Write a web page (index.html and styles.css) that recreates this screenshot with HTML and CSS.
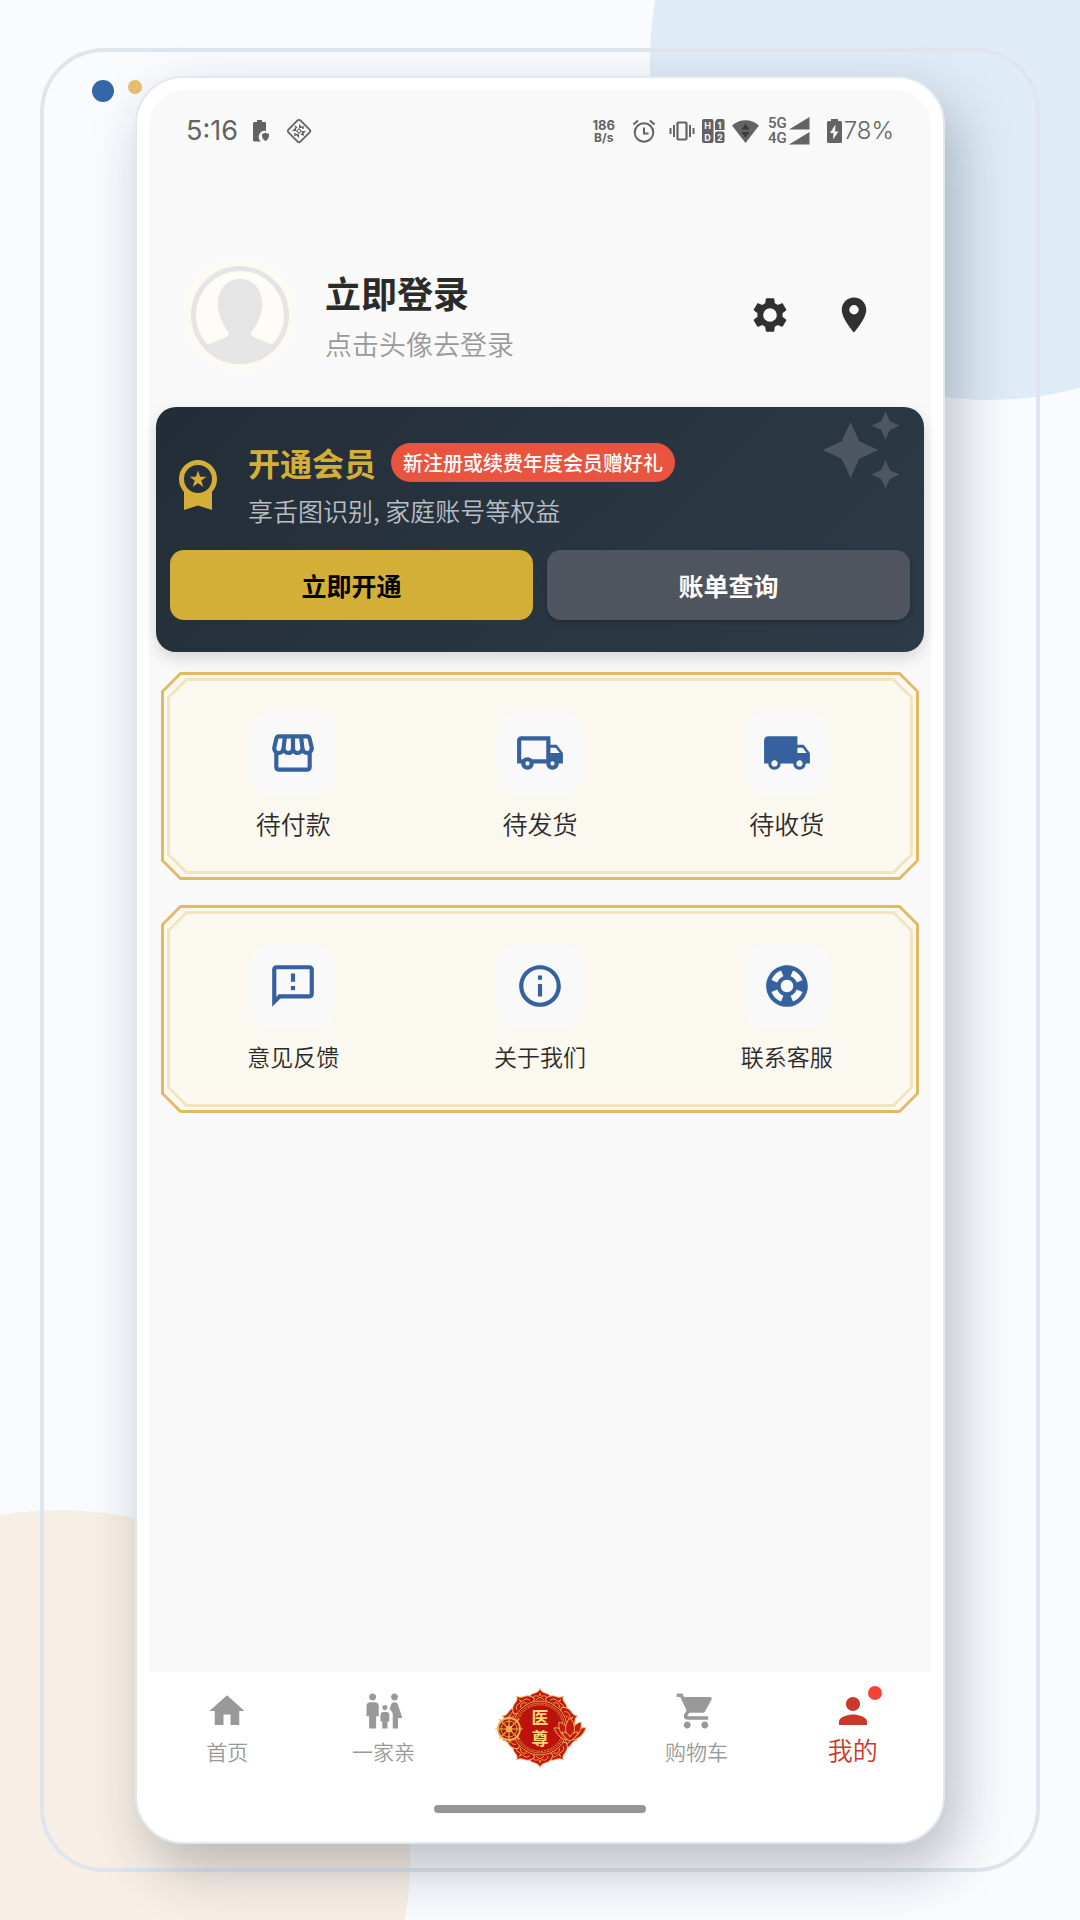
FILE: index.html
```html
<!DOCTYPE html>
<html lang="zh-CN">
<head>
<meta charset="utf-8">
<meta name="viewport" content="width=device-width, initial-scale=1">
<title>我的</title>
<link rel="stylesheet" href="styles.css">
</head>
<body>
<div class="page">
	<div class="circle circle-blue"></div>
	<div class="circle circle-sand"></div>
	<div class="outline"></div>
	<div class="dots"><i class="dot dot-blue"></i><i class="dot dot-gold"></i></div>

	<div class="phone">
		<div class="screen">
			<div class="status">
				<span class="time">5:16</span>
				<svg class="st-clip" width="17" height="22" viewBox="0 0 17 22"><path d="M4 0h5v2h3a1 1 0 0 1 1 1v8a6 6 0 0 0-5 10.500H1.500A1.500 1.500 0 0 1 0 20V3.500A1.500 1.500 0 0 1 1.500 2H4z"/><path d="M12.500 12.500c1 .9 2.200 1.200 3.500 1.300.2 3.400-.6 5.600-3.500 7.200-2.900-1.600-3.700-3.800-3.500-7.200 1.300-.1 2.500-.4 3.500-1.300z"/></svg>
				<svg class="st-diamond" width="26" height="26" viewBox="0 0 26 26"><rect x="4.500" y="4.500" width="17" height="17" rx="2" transform="rotate(45 13 13)" fill="none" stroke="#636363" stroke-width="1.800"/><path d="M13 6l4 4h-4zM20 13l-4 4v-4zM13 20l-4-4h4zM6 13l4-4v4zM13 10l3 3-3 3-3-3z"/><path d="M9 8l2 2M17 8v3M18 17l-3-1M9 18v-3" stroke="#636363" stroke-width="1.500"/><circle cx="13" cy="13" r="1.200" fill="#f9f9f9"/></svg>
				<span class="grow"></span>
				<span class="speed"><b>186</b><b class="unit">B/s</b></span>
				<svg class="st-alarm" width="24" height="24" viewBox="0 0 24 24"><g fill="none" stroke="#636363" stroke-width="2"><circle cx="12" cy="13.500" r="9.300"/><path d="M12 8.500v6h4.500M1.500 5.500L6 1.500M18 1.500l4.500 4"/></g></svg>
				<svg class="st-vibrate" width="26" height="22" viewBox="0 0 26 22"><rect x="8.500" y="2.500" width="9" height="17" rx="1" fill="none" stroke="#636363" stroke-width="2.200"/><path d="M5 5v12M1.500 8v6M21 5v12M24.500 8v6" stroke="#636363" stroke-width="2"/></svg>
				<svg class="st-hd" width="23" height="26" viewBox="0 0 23 26"><rect x="0" y="1" width="11.500" height="24" rx="2"/><path d="M15 1h5.500a2 2 0 0 1 2 2v9H13V4z"/><rect x="13" y="13.500" width="9.500" height="11.500" rx="2"/><g class="st-tiny"><text x="2.300" y="10.500">H</text><text x="15.500" y="10.500">1</text><text x="2.300" y="22.500">D</text><text x="15" y="22.500">2</text></g></svg>
				<svg class="st-wifi" width="27" height="23" viewBox="0 0 27 23"><path d="M0 5.500C8-1.500 19-1.500 27 5.500L13.500 23z"/><path d="M13.500 4l4 5.500h-8zM9.500 12h8l-4 5.500z" fill="#3a3a3a"/></svg>
				<span class="net"><b>5G</b><b>4G</b></span>
				<svg class="st-signal" width="21" height="28" viewBox="0 0 21 28"><path d="M20.500 0v12.500H0zM20.500 15v12.500H0z"/></svg>
				<svg class="st-battery" width="15" height="24" viewBox="0 0 15 24"><path d="M4 0h7v2h2.500A1.500 1.500 0 0 1 15 3.500v19a1.500 1.500 0 0 1-1.500 1.500h-12A1.500 1.500 0 0 1 0 22.500v-19A1.500 1.500 0 0 1 1.500 2H4z"/><path d="M8.500 5.500L3 14h3.500L6 20.500l5.500-8H8z" fill="#f9f9f9"/></svg>
				<span class="percent">78%</span>
			</div>

			<header class="profile">
				<button class="avatar" aria-label="头像">
					<svg viewBox="0 0 98 98"><defs><clipPath id="face"><circle cx="49" cy="49" r="46"/></clipPath></defs><circle cx="49" cy="49" r="46.500" fill="#fefcf6" stroke="#e5e5e6" stroke-width="5"/><path clip-path="url(#face)" fill="#e5e5e6" d="M49 13c13 0 22 10 22 25 0 11-4 19-9 26-3 4-2 6 3 8l22 9v20H11V81l22-9c5-2 6-4 3-8-5-7-9-15-9-26 0-15 9-25 22-25z"/></svg>
				</button>
				<div class="who">
					<h1>立即登录</h1>
					<p>点击头像去登录</p>
				</div>
				<button class="icon-btn" aria-label="设置">
					<svg viewBox="0 0 24 24"><path d="M19.140 12.940c.04-.3.06-.61.06-.94 0-.32-.02-.64-.07-.94l2.030-1.580c.18-.14.23-.41.12-.61l-1.920-3.320c-.12-.22-.37-.29-.59-.22l-2.390.96c-.5-.38-1.030-.7-1.620-.94l-.36-2.540c-.04-.24-.24-.41-.48-.41h-3.840c-.24 0-.43.17-.47.41l-.36 2.540c-.59.24-1.130.57-1.620.94l-2.390-.96c-.22-.08-.47 0-.59.22L2.740 8.870c-.12.21-.08.47.12.61l2.030 1.580c-.05.3-.09.63-.09.94s.02.64.07.94l-2.030 1.580c-.18.14-.23.41-.12.61l1.920 3.320c.12.22.37.29.59.22l2.390-.96c.5.38 1.030.7 1.620.94l.36 2.540c.05.24.24.41.48.41h3.840c.24 0 .44-.17.47-.41l.36-2.540c.59-.24 1.130-.56 1.620-.94l2.390.96c.22.08.47 0 .59-.22l1.920-3.320c.12-.22.07-.47-.12-.61l-2.010-1.580zM12 15.900a3.900 3.900 0 1 1 0-7.800 3.900 3.900 0 0 1 0 7.800z"/></svg>
				</button>
				<button class="icon-btn" aria-label="地址">
					<svg viewBox="0 0 24 24"><path d="M12 2C8.130 2 5 5.130 5 9c0 5.250 7 13 7 13s7-7.750 7-13c0-3.870-3.130-7-7-7zm0 9.700a2.700 2.700 0 1 1 0-5.400 2.700 2.700 0 0 1 0 5.400z"/></svg>
				</button>
			</header>

			<section class="vip">
				<svg class="sparkle" viewBox="0 0 24 24"><path d="M19 9l1.250-2.750L23 5l-2.750-1.250L19 1l-1.250 2.750L15 5l2.750 1.250zM11.500 9.500L9 4 6.500 9.500 1 12l5.500 2.500L9 20l2.500-5.500L17 12zM19 15l-1.250 2.750L15 19l2.750 1.250L19 23l1.250-2.750L23 19l-2.750-1.250L19 15z"/></svg>
				<div class="vip-head">
					<svg class="medal" viewBox="0 0 42 52"><path d="M7 32h28v19l-14-4.500L7 51z"/><circle cx="21" cy="20" r="16.500" fill="#25303b" stroke="#d4af37" stroke-width="5"/><path d="M21 11.500l2.100 6.200h6.400l-5.200 3.900 2 6.300-5.300-3.800-5.300 3.800 2-6.300-5.200-3.900h6.400z"/></svg>
					<div>
						<div class="vip-title"><h2>开通会员</h2><span class="tag">新注册或续费年度会员赠好礼</span></div>
						<p>享舌图识别, 家庭账号等权益</p>
					</div>
				</div>
				<div class="vip-actions">
					<button class="btn btn-gold">立即开通</button>
					<button class="btn btn-grey">账单查询</button>
				</div>
			</section>

			<section class="panel">
				<div class="panel-body">
					<a class="item" href="#">
						<span class="tile"><svg viewBox="0 0 24 24"><path d="M21.900 8.890l-1.050-4.370c-.22-.9-1-1.520-1.910-1.520H5.050c-.9 0-1.690.63-1.900 1.520L2.100 8.890c-.24 1.020-.02 2.060.62 2.880.08.11.19.19.28.29V19c0 1.100.9 2 2 2h14c1.100 0 2-.9 2-2v-6.940c.09-.09.2-.18.28-.28.64-.82.87-1.870.62-2.890zm-2.990-3.900l1.050 4.370c.1.420.01.840-.25 1.170-.14.180-.44.470-.94.470-.61 0-1.140-.49-1.210-1.140L16.980 5l1.930-.01zM13 5h1.960l.54 4.520c.05.390-.07.780-.33 1.070-.22.260-.54.410-.95.410-.67 0-1.220-.59-1.220-1.310V5zM8.490 9.520L9.040 5H11v4.690c0 .72-.55 1.310-1.290 1.310-.34 0-.65-.15-.89-.41-.25-.29-.37-.68-.33-1.070zm-4.450-.16L5.050 5h1.970l-.58 4.860c-.08.65-.6 1.140-1.210 1.140-.49 0-.8-.29-.93-.47-.27-.32-.36-.75-.26-1.170zM5 19v-6.030c.08.010.15.030.23.030.87 0 1.660-.36 2.240-.95.6.6 1.400.95 2.310.95.870 0 1.650-.36 2.230-.93.590.57 1.390.93 2.290.93.840 0 1.640-.35 2.240-.95.580.59 1.370.95 2.240.95.080 0 .15-.02.23-.03V19H5z"/></svg></span>
						<span>待付款</span>
					</a>
					<a class="item" href="#">
						<span class="tile"><svg viewBox="0 0 24 24"><path d="M20 8h-3V4H3c-1.100 0-2 .9-2 2v11h2c0 1.660 1.340 3 3 3s3-1.340 3-3h6c0 1.660 1.340 3 3 3s3-1.340 3-3h2v-5l-3-4zm-.5 1.500l1.960 2.500H17V9.500h2.500zM6 18c-.55 0-1-.45-1-1s.45-1 1-1 1 .45 1 1-.45 1-1 1zm2.220-3c-.55-.61-1.330-1-2.220-1s-1.670.39-2.220 1H3V6h12v9H8.220zM18 18c-.55 0-1-.45-1-1s.45-1 1-1 1 .45 1 1-.45 1-1 1z"/></svg></span>
						<span>待发货</span>
					</a>
					<a class="item" href="#">
						<span class="tile"><svg viewBox="0 0 24 24"><path d="M20 8h-3V4H3c-1.100 0-2 .9-2 2v11h2c0 1.660 1.340 3 3 3s3-1.340 3-3h6c0 1.660 1.340 3 3 3s3-1.340 3-3h2v-5l-3-4zM6 18.500c-.83 0-1.500-.67-1.500-1.500s.67-1.500 1.500-1.500 1.500.67 1.500 1.500-.67 1.500-1.500 1.500zm13.500-9l1.960 2.500H17V9.500h2.500zm-1.500 9c-.83 0-1.500-.67-1.500-1.500s.67-1.500 1.500-1.500 1.500.67 1.500 1.500-.67 1.500-1.500 1.500z"/></svg></span>
						<span>待收货</span>
					</a>
				</div>
			</section>

			<section class="panel panel-help">
				<div class="panel-body">
					<a class="item" href="#">
						<span class="tile"><svg viewBox="0 0 24 24"><path d="M20 2H4c-1.100 0-2 .9-2 2v18l4-4h14c1.100 0 2-.9 2-2V4c0-1.100-.9-2-2-2zm0 14H5.170L4 17.170V4h16v12zM11 12h2v2h-2zm0-6h2v4h-2z"/></svg></span>
						<span>意见反馈</span>
					</a>
					<a class="item" href="#">
						<span class="tile"><svg viewBox="0 0 24 24"><path d="M11 7h2v2h-2zm0 4h2v6h-2zm1-9C6.480 2 2 6.480 2 12s4.480 10 10 10 10-4.480 10-10S17.520 2 12 2zm0 18c-4.410 0-8-3.590-8-8s3.590-8 8-8 8 3.590 8 8-3.590 8-8 8z"/></svg></span>
						<span>关于我们</span>
					</a>
					<a class="item" href="#">
						<span class="tile"><svg viewBox="0 0 24 24"><path d="M12 2C6.480 2 2 6.480 2 12s4.480 10 10 10 10-4.480 10-10S17.520 2 12 2zm7.460 7.120l-2.780 1.150c-.51-1.360-1.580-2.440-2.950-2.940l1.150-2.780c2.100.8 3.770 2.470 4.580 4.570zM12 15c-1.660 0-3-1.340-3-3s1.340-3 3-3 3 1.340 3 3-1.340 3-3 3zM9.130 4.540l1.170 2.780c-1.380.5-2.470 1.590-2.980 2.970L4.540 9.130c.81-2.110 2.480-3.780 4.590-4.590zM4.540 14.870l2.780-1.150c.51 1.380 1.590 2.460 2.970 2.960l-1.170 2.780c-2.100-.81-3.770-2.480-4.580-4.590zm10.340 4.590l-1.150-2.780c1.370-.51 2.450-1.590 2.950-2.970l2.780 1.170c-.81 2.100-2.480 3.770-4.580 4.580z"/></svg></span>
						<span>联系客服</span>
					</a>
				</div>
			</section>
		</div>

		<nav class="tabs">
			<a class="tab" href="#"><svg viewBox="0 0 24 24"><path d="M10 20v-6h4v6h5v-8h3L12 3 2 12h3v8z"/></svg><span>首页</span></a>
			<a class="tab" href="#"><svg viewBox="0 0 24 24"><path d="M16 4c0-1.110.89-2 2-2s2 .89 2 2-.89 2-2 2-2-.89-2-2zm4 18v-6h2.500l-2.540-7.630A2.010 2.010 0 0 0 18.060 7h-.12c-.86 0-1.630.55-1.900 1.370l-.86 2.580c1.080.6 1.820 1.730 1.820 3.050v8h3zm-7.500-10.500c.83 0 1.500-.67 1.500-1.500s-.67-1.500-1.500-1.500S11 9.170 11 10s.67 1.500 1.500 1.500zM5.500 6c1.110 0 2-.89 2-2s-.89-2-2-2-2 .89-2 2 .89 2 2 2zm2 16v-7H9V9c0-1.100-.9-2-2-2H4c-1.100 0-2 .9-2 2v6h1.500v7h4zm6.500 0v-4h1v-4c0-.82-.68-1.500-1.500-1.500h-2c-.82 0-1.500.68-1.500 1.500v4h1v4h3z"/></svg><span>一家亲</span></a>
			<a class="tab-main" href="#" aria-label="医尊">
				<svg viewBox="-46 -40 92 80">
					<defs>
						<g id="petal"><path d="M-13-27Q-11-34-5-35Q-1-36 0-39.500Q1-36 5-35Q11-34 13-27L0-18z" fill="#c0180f" stroke="#f3c277" stroke-width=".9"/><path d="M-8-28Q-7-33-3-32Q0-31 0-35Q0-31 3-32Q7-33 8-28M-4-28Q0-33 4-28" fill="none" stroke="#e9a548" stroke-width=".9"/></g>
					</defs>
					<use href="#petal"/><use href="#petal" transform="rotate(36)"/><use href="#petal" transform="rotate(72)"/><use href="#petal" transform="rotate(108)"/><use href="#petal" transform="rotate(144)"/><use href="#petal" transform="rotate(180)"/><use href="#petal" transform="rotate(216)"/><use href="#petal" transform="rotate(252)"/><use href="#petal" transform="rotate(288)"/><use href="#petal" transform="rotate(324)"/>
					<circle r="27" fill="#b5120b"/>
					<g fill="none" stroke="#e7a548"><circle r="27" stroke-width="1"/><circle r="25" stroke-width=".7"/><circle r="23.200" stroke-width="1" stroke-dasharray="2 1"/></g>
					<circle r="22" fill="#bd120b"/>
					<g stroke="#efb250" fill="none"><circle cx="-31" cy="1" r="11" fill="#a9180c" stroke-width="1.800"/><circle cx="-31" cy="1" r="8" stroke-width=".8"/><circle cx="-31" cy="1" r="3" fill="#d98a30"/><path d="M-31-13v28M-45 1h28M-41-9l20 20M-21-9l-20 20" stroke-width="1.200"/></g>
					<g fill="#c41d12" stroke="#f1bb62" stroke-width=".9" stroke-linejoin="round"><path d="M30 12C20 12 16 5 14 0c5-1 9 2 11 5zM30 12C40 12 44 5 46 0c-5-1-9 2-11 5z"/><path d="M30 12C20 8 18 0 19-6c5 1 8 5 9 9zM30 12C40 8 42 0 41-6c-5 1-8 5-9 9z"/><path d="M30 11c-6-6-6-15 0-21 6 6 6 15 0 21z"/><path d="M30 13c-4-2-7-5-8-9 4 0 7 2 8 5 1-3 4-5 8-5-1 4-4 7-8 9z"/></g>
					<g class="seal"><text x="0" y="-4">医</text><text x="0" y="17">尊</text></g>
				</svg>
			</a>
			<a class="tab" href="#"><svg viewBox="0 0 24 24"><path d="M7 18c-1.100 0-1.990.9-1.990 2S5.900 22 7 22s2-.9 2-2-.9-2-2-2zM1 2v2h2l3.600 7.590-1.350 2.450c-.16.280-.25.610-.25.960 0 1.100.9 2 2 2h12v-2H7.420c-.14 0-.25-.11-.25-.25l.03-.12.900-1.630h7.450c.75 0 1.410-.41 1.750-1.030l3.580-6.490A1 1 0 0 0 20 4H5.210l-.94-2H1zm16 16c-1.100 0-1.990.9-1.990 2s.89 2 1.990 2 2-.9 2-2-.9-2-2-2z"/></svg><span>购物车</span></a>
			<a class="tab tab-on" href="#"><i class="badge"></i><svg viewBox="0 0 24 24"><path d="M12 12c2.210 0 4-1.790 4-4s-1.790-4-4-4-4 1.790-4 4 1.790 4 4 4zm0 2c-2.670 0-8 1.340-8 4v2h16v-2c0-2.660-5.330-4-8-4z"/></svg><span>我的</span></a>
		</nav>
		<div class="home-bar"></div>
	</div>
</div>
</body>
</html>
```

FILE: styles.css
```css
* {
	box-sizing: border-box;
}
body {
	margin: 0;
	font-family: "Noto Sans CJK SC", "Noto Sans", sans-serif;
	color: #2b2b2b;
	background: #f9fbff;
}
h1, h2, p {
	margin: 0;
}
a {
	color: inherit;
	text-decoration: none;
}
button {
	margin: 0;
	padding: 0;
	border: 0;
	background: none;
	font-family: inherit;
	color: inherit;
	cursor: pointer;
}
svg {
	display: block;
	flex: none;
	fill: currentColor;
}

/* backdrop */
.page {
	position: relative;
	display: flex;
	min-height: 100vh;
	padding: 76px 12.5%;
	overflow: hidden;
}
.circle {
	position: absolute;
	border-radius: 50%;
}
.circle-blue {
	top: -280px;
	right: -250px;
	width: 680px;
	height: 680px;
	background: #e0ebf8;
}
.circle-sand {
	left: -290px;
	bottom: -290px;
	width: 700px;
	height: 700px;
	background: #f7efe6;
}
.outline {
	position: absolute;
	top: 48px;
	right: 40px;
	bottom: 48px;
	left: 40px;
	border: 4px solid #dfe5ed;
	border-radius: 64px;
}
.dots {
	position: absolute;
	top: 80px;
	left: 92px;
	display: flex;
	gap: 14px;
}
.dot {
	border-radius: 50%;
}
.dot-blue {
	width: 22px;
	height: 22px;
	background: #3566a8;
}
.dot-gold {
	width: 14px;
	height: 14px;
	background: #e8c070;
}

/* phone */
.phone {
	position: relative;
	flex: 1;
	min-width: 0;
	display: flex;
	flex-direction: column;
	padding: 12px;
	border: 2px solid #e2e8f0;
	border-radius: 48px;
	background: #fff;
	box-shadow: 12px 24px 56px rgba(20, 32, 44, .28);
}
.screen {
	flex: 1;
	border-radius: 36px 36px 0 0;
	background: #f9f9f9;
}

.status {
	display: flex;
	align-items: center;
	height: 82px;
	padding: 0 37px;
	font-family: Inter, "Liberation Sans", sans-serif;
	color: #636363;
}
.time, .percent {
	line-height: 30px;
}
.time {
	font-size: 27px;
}
.percent {
	margin-left: 2px;
	font-size: 24px;
	font-weight: 300;
}
.grow {
	flex: 1;
}
.st-clip {
	margin-left: 15px;
}
.st-diamond {
	margin-left: 16px;
}
.speed, .net {
	display: flex;
	flex-direction: column;
	align-items: center;
}
.speed b {
	font-size: 13px;
	line-height: 14px;
}
.speed .unit {
	font-size: 12px;
	line-height: 12px;
}
.net b {
	font: 500 15px/15px Roboto, sans-serif;
}
.st-alarm {
	margin-left: 17px;
}
.st-vibrate {
	margin-left: 13px;
}
.st-hd {
	margin-left: 7px;
}
.st-wifi {
	margin-left: 7px;
}
.net {
	margin-left: 9px;
}
.st-signal {
	margin-left: 2px;
}
.st-battery {
	margin-left: 17px;
}
.st-tiny {
	fill: #f9f9f9;
	font-size: 9px;
	font-weight: 700;
}

.profile {
	display: flex;
	align-items: center;
	gap: 42px;
	margin-top: 87px;
	padding: 0 56px 0 35px;
}
.avatar {
	width: 112px;
	height: 112px;
	padding: 7px;
	border-radius: 50%;
	background: #fdfaf4;
}
.who {
	flex: 1;
	margin-left: -13px;
}
.who h1 {
	font-size: 36px;
	line-height: 50px;
}
.who p {
	margin-top: 7px;
	font-size: 27px;
	line-height: 40px;
	font-weight: 350;
	color: #999;
}
.icon-btn svg {
	width: 42px;
	height: 42px;
	fill: #303030;
}

/* membership card */
.vip {
	position: relative;
	margin: 36px 7px 0;
	padding: 31px 14px 32px;
	border-radius: 20px;
	background: linear-gradient(135deg, #232d37, #2d3b48);
	box-shadow: 0 6px 16px rgba(0, 0, 0, .14);
}
.sparkle {
	position: absolute;
	top: 1px;
	right: 21px;
	width: 84px;
	height: 84px;
	fill: #4c5762;
}
.vip-head {
	display: flex;
	align-items: center;
	gap: 29px;
	padding-left: 7px;
	color: #d4af37;
}
.medal {
	width: 42px;
	height: 52px;
	margin-top: 4px;
}
.vip-title {
	display: flex;
	align-items: center;
	gap: 15px;
	height: 48px;
}
.vip-title h2 {
	font-size: 32px;
	line-height: 48px;
}
.tag {
	padding: 0 12px;
	border-radius: 20px;
	background: #e9543f;
	color: #fff;
	font-size: 20px;
	line-height: 39px;
	font-weight: 500;
}
.vip-head p {
	margin-top: 6px;
	font-size: 25px;
	line-height: 36px;
	font-weight: 350;
	color: #b9bec4;
}
.vip-actions {
	display: grid;
	grid-template-columns: 1fr 1fr;
	gap: 14px;
	margin-top: 22px;
}
.btn {
	height: 70px;
	border-radius: 14px;
	font-size: 25px;
	font-weight: 700;
}
.btn-gold {
	background: #d4af37;
	color: #000;
}
.btn-grey {
	background: #4e555e;
	color: #fff;
	box-shadow: 0 2px 4px rgba(0, 0, 0, .25);
}

/* panels with cut corners and a double gold line */
.panel {
	--cut: 19px;
	position: relative;
	isolation: isolate;
	margin: 20px 12px 0;
	padding: 9px;
	background: #e2b964;
}
.panel + .panel {
	margin-top: 25px;
}
.panel::before, .panel::after {
	content: "";
	position: absolute;
	z-index: -1;
}
.panel::before {
	--cut: 17px;
	inset: 3px;
	background: #fbf8f0;
}
.panel::after {
	inset: 6px;
	background: #f3e3bf;
}
.panel-body {
	--cut: 17px;
}
.panel, .panel::before, .panel::after, .panel-body {
	clip-path: polygon(var(--cut) 0, calc(100% - var(--cut)) 0, 100% var(--cut), 100% calc(100% - var(--cut)), calc(100% - var(--cut)) 100%, var(--cut) 100%, 0 calc(100% - var(--cut)), 0 var(--cut));
}
.panel-body {
	display: grid;
	grid-template-columns: repeat(3, 1fr);
	padding: 30px 0;
	background: #fbf8f0;
}
.item {
	display: flex;
	flex-direction: column;
	align-items: center;
	gap: 10px;
	font-size: 25px;
	line-height: 36px;
	font-weight: 350;
}
.panel-help .item {
	font-size: 23px;
}
.tile {
	padding: 17px;
	border-radius: 22px;
	background: #f9f9fa;
	color: #35619f;
}
.tile svg {
	width: 50px;
	height: 50px;
}

/* bottom tabs */
.tabs {
	display: grid;
	grid-template-columns: repeat(5, 1fr);
	padding-top: 16px;
	justify-items: center;
	background: #fff;
}
.tab {
	position: relative;
	display: flex;
	flex-direction: column;
	align-items: center;
	gap: 3px;
	padding-top: 2px;
	font-size: 21px;
	line-height: 32px;
	font-weight: 350;
	color: #999;
}
.tab svg {
	width: 42px;
	height: 42px;
}
.tab-on {
	gap: 1px;
	font-size: 25px;
	color: #c8392b;
}
.badge {
	position: absolute;
	top: -2px;
	right: -4px;
	width: 14px;
	height: 14px;
	border-radius: 50%;
	background: #f44336;
}
.tab-main svg {
	width: 92px;
	height: 80px;
}
.seal {
	fill: #fbd676;
	font-family: "Liberation Sans", "Noto Sans CJK SC", sans-serif;
	font-size: 17px;
	font-weight: 700;
	text-anchor: middle;
}
.home-bar {
	align-self: center;
	width: 27%;
	height: 8px;
	margin: 37px 0 17px;
	border-radius: 4px;
	background: #959595;
}
```
